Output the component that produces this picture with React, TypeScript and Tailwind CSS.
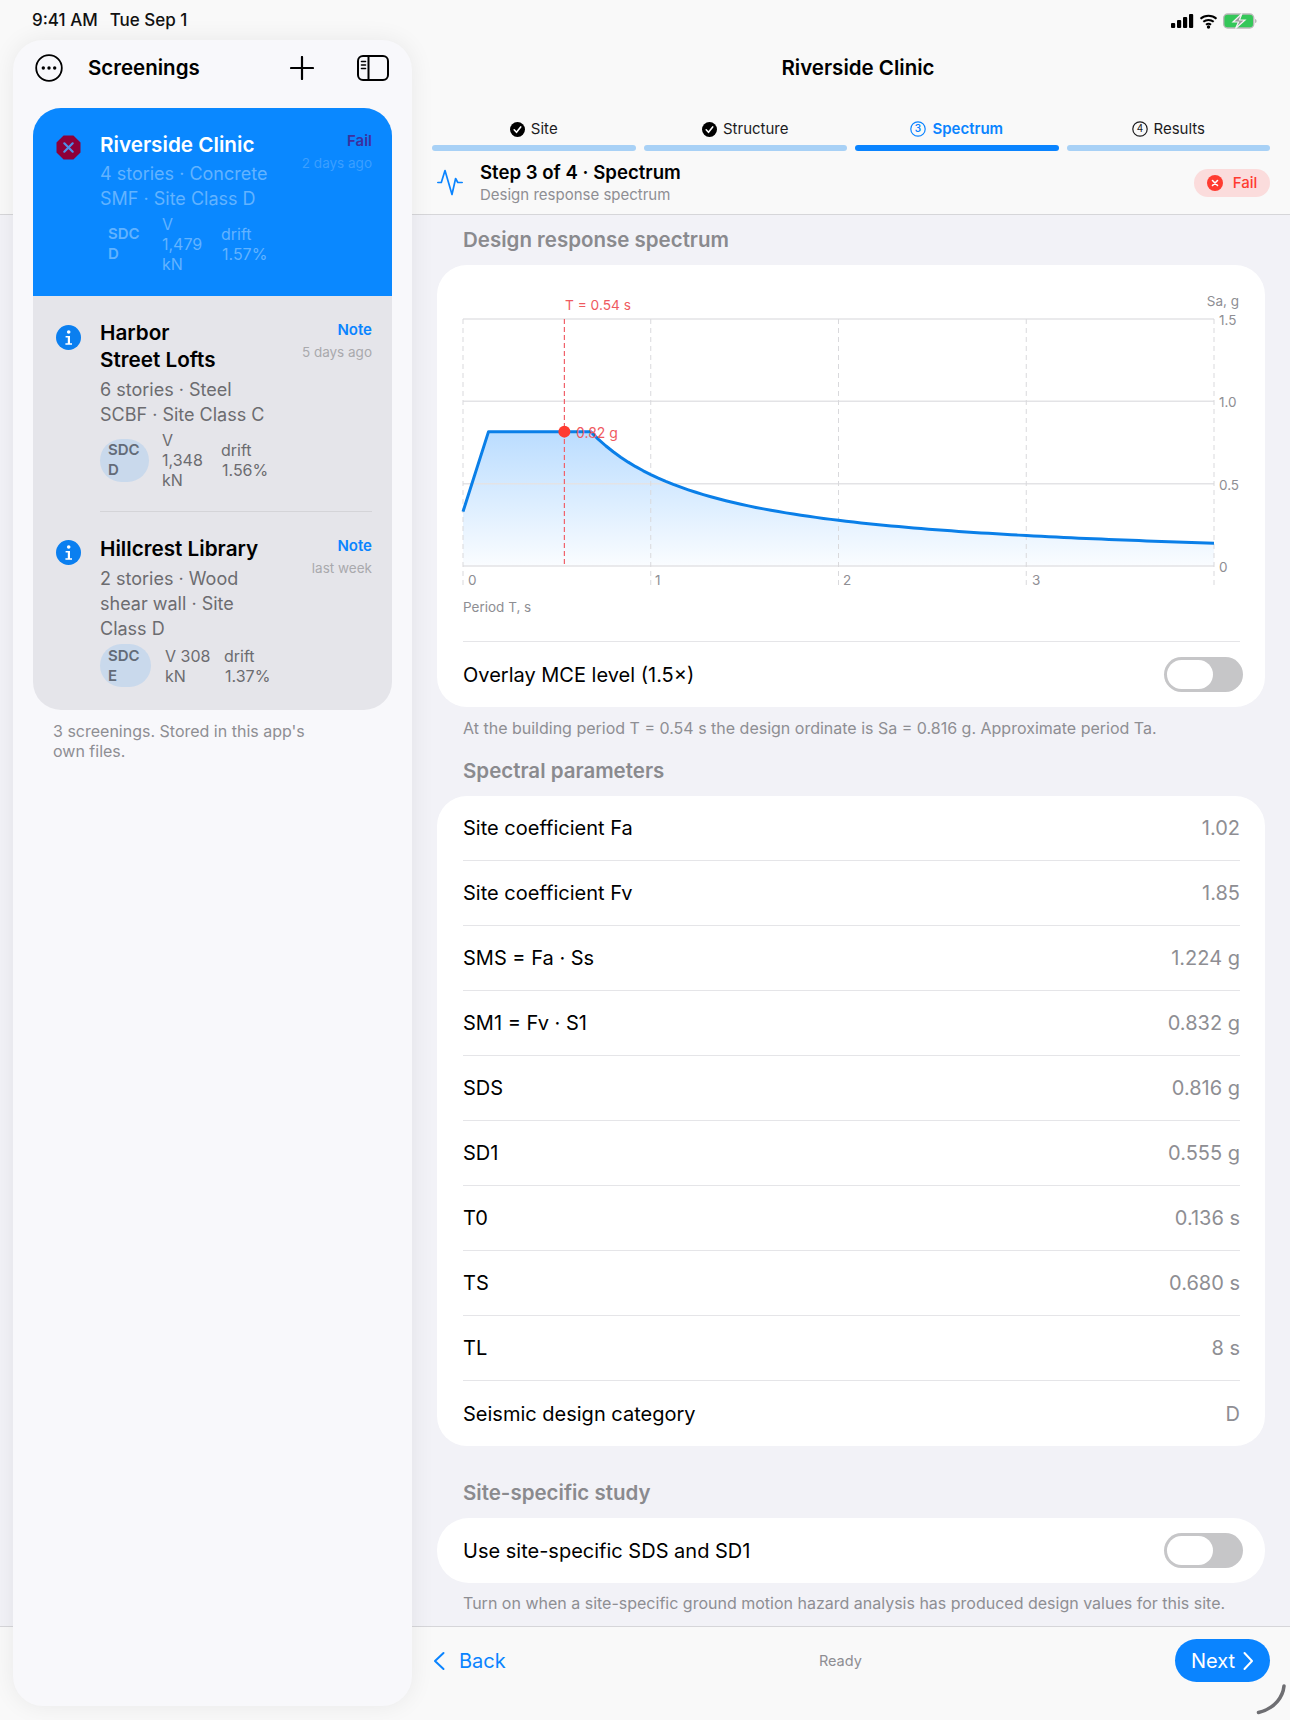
import type { ReactNode } from "react";

const font = { fontFamily: "Inter, 'Noto Sans', sans-serif" };

const PARAMS = [
  ["Site coefficient Fa", "1.02"],
  ["Site coefficient Fv", "1.85"],
  ["SMS = Fa · Ss", "1.224 g"],
  ["SM1 = Fv · S1", "0.832 g"],
  ["SDS", "0.816 g"],
  ["SD1", "0.555 g"],
  ["T0", "0.136 s"],
  ["TS", "0.680 s"],
  ["TL", "8 s"],
  ["Seismic design category", "D"],
];

// chart geometry, origin is the card's top left corner
const X0 = 26;
const PX_PER_S = 187.75;
const Y0 = 301;
const PX_PER_G = 164.67;
const px = (t: number) => X0 + t * PX_PER_S;
const py = (g: number) => Y0 - g * PX_PER_G;

function spectrumPath() {
  const pts: string[] = [`${px(0)},${py(0.33)}`, `${px(0.136)},${py(0.816)}`, `${px(0.68)},${py(0.816)}`];
  for (let t = 0.72; t <= 4; t += 0.04) pts.push(`${px(t)},${py(0.555 / t)}`);
  pts.push(`${px(4)},${py(0.555 / 4)}`);
  return pts;
}

function SpectrumChart() {
  const pts = spectrumPath();
  const line = "M" + pts.join(" L");
  const area = `${line} L${px(4)},${py(0)} L${px(0)},${py(0)} Z`;
  return (
    <svg width="828" height="376" viewBox="0 0 828 376" className="block" style={font}>
      <defs>
        <linearGradient id="fill" x1="0" y1="0" x2="0" y2="1">
          <stop offset="0" stopColor="#0a84ff" stopOpacity="0.28" />
          <stop offset="1" stopColor="#0a84ff" stopOpacity="0.02" />
        </linearGradient>
      </defs>
      <path d={area} fill="url(#fill)" />
      {[1.5, 1, 0.5, 0].map((g) => (
        <line key={g} x1={X0} x2={px(4)} y1={py(g)} y2={py(g)} stroke="#e3e3e6" strokeWidth="1.5" />
      ))}
      {[0, 1, 2, 3, 4].map((t) => (
        <line key={t} x1={px(t)} x2={px(t)} y1={py(1.5)} y2={320} stroke="#d9d9dc" strokeWidth="1" strokeDasharray="5 4" />
      ))}
      <line x1={px(0.54)} x2={px(0.54)} y1={py(1.5)} y2={py(0)} stroke="#f0626a" strokeWidth="1.2" strokeDasharray="5 3" />
      <path d={line} fill="none" stroke="#0a7fe8" strokeWidth="3" strokeLinejoin="round" />
      <circle cx={px(0.54)} cy={py(0.816)} r="6" fill="#ff3b30" />
      <text x="128" y="45" fontSize="13.7" fill="#ef5a5f">T = 0.54 s</text>
      <text x="139" y="172.5" fontSize="14" fill="#ef5a5f">0.82 g</text>
      <text x="802" y="41" fontSize="13.5" fill="#8e8e93" textAnchor="end">Sa, g</text>
      {[["1.5", 59.5], ["1.0", 141.5], ["0.5", 224.5], ["0", 306.5]].map(([t, y]) => (
        <text key={t} x="782" y={y} fontSize="13.5" fill="#8e8e93">{t}</text>
      ))}
      {[["0", 31], ["1", 218], ["2", 406], ["3", 595]].map(([t, x]) => (
        <text key={t} x={x} y="320" fontSize="13.5" fill="#8e8e93">{t}</text>
      ))}
      <text x="26" y="347" fontSize="13.5" fill="#8e8e93">Period T, s</text>
    </svg>
  );
}

function Toggle() {
  return (
    <div className="w-[79px] h-[35px] rounded-full bg-[#c6c6c8] p-[3px] shrink-0">
      <div className="w-[46px] h-[29px] rounded-full bg-white" />
    </div>
  );
}

function InfoIcon() {
  return (
    <svg width="25" height="25" viewBox="0 0 25 25" className="shrink-0">
      <circle cx="12.5" cy="12.5" r="12.5" fill="#0a7ff0" />
      <circle cx="12.7" cy="7" r="1.8" fill="#fff" />
      <path d="M9.6 11h4.4v7.2h2v1.6H9.4v-1.6h2.4v-5.6H9.6z" fill="#fff" />
    </svg>
  );
}

function FailOctagon() {
  return (
    <svg width="25" height="25" viewBox="0 0 25 25" className="shrink-0">
      <path d="M7.6 0.5h9.8l7.1 7v10l-7.1 7H7.6l-7.1-7v-10z" fill="#8e0038" />
      <path d="M8.3 8.3l8.4 8.4M16.7 8.3l-8.4 8.4" stroke="#4f8fe8" strokeWidth="2.2" strokeLinecap="round" />
    </svg>
  );
}

function DoneIcon() {
  return (
    <svg width="15" height="15" viewBox="0 0 15 15" className="shrink-0">
      <circle cx="7.5" cy="7.5" r="7.5" fill="#000" />
      <path d="M4.2 7.8l2.3 2.5 4.2-5.4" fill="none" stroke="#fff" strokeWidth="1.6" strokeLinecap="round" strokeLinejoin="round" />
    </svg>
  );
}

function StepNumber({ n, color }: { n: number; color: string }) {
  return (
    <svg width="16" height="16" viewBox="0 0 16 16" className="shrink-0" style={font}>
      <circle cx="8" cy="8" r="7.2" fill="none" stroke={color} strokeWidth="1.2" />
      <text x="8" y="11.4" fontSize="10" fill={color} textAnchor="middle">{n}</text>
    </svg>
  );
}

function StepTab({ icon, label, active }: { icon: ReactNode; label: string; active?: boolean }) {
  return (
    <div className="flex-1 flex flex-col items-center gap-[6px]">
      <div className={`h-[20px] flex items-center gap-[6px] text-[15px] leading-[20px] ${active ? "text-[#0a84ff] font-semibold" : "text-[#1c1c1e]"}`}>
        {icon}
        <span>{label}</span>
      </div>
      <div className={`w-full h-[6px] rounded-full ${active ? "bg-[#0a84ff]" : "bg-[#a8d1f6]"}`} />
    </div>
  );
}

function Metrics({ sdc, v, drift, wide, tint }: { sdc: string[]; v: string[]; drift: string[]; wide?: boolean; tint?: boolean }) {
  return (
    <div className="flex items-center text-[16px] leading-[20px]">
      <div className={`${wide ? "w-[51px] mr-[14px]" : "w-[49px] mr-[13px]"} h-[43px] pl-[8px] py-[1.5px] rounded-full font-semibold text-[15px] ${tint ? "" : "bg-[#c9d9ec] text-[#636b78]"}`}>
        {sdc.map((t) => <div key={t}>{t}</div>)}
      </div>
      <div className="w-[59px]">
        {v.map((t) => <div key={t}>{t}</div>)}
      </div>
      <div>
        <div>{drift[0]}</div>
        <div className="pl-px">{drift[1]}</div>
      </div>
    </div>
  );
}

function Row({ label, value, last }: { label: string; value: string; last?: boolean }) {
  return (
    <div className={`h-[65px] ml-[26px] mr-[25px] flex items-center justify-between text-[20px] ${last ? "" : "border-b border-[#e5e5e8]"}`}>
      <span className="text-black">{label}</span>
      <span className="text-[#8e8e93]">{value}</span>
    </div>
  );
}

function Sidebar() {
  return (
    <aside className="absolute left-[13px] top-[40px] w-[399px] h-[1666px] rounded-[30px] bg-[#f8f8fb] shadow-[0_0_24px_rgba(0,0,0,0.07)] px-[20px]">
      <div className="h-[56px] flex items-center pl-[2px] pr-[3px]">
        <svg width="28" height="28" viewBox="0 0 28 28">
          <circle cx="14" cy="14" r="12.8" fill="none" stroke="#000" strokeWidth="1.8" />
          <circle cx="8.3" cy="14" r="1.7" />
          <circle cx="14" cy="14" r="1.7" />
          <circle cx="19.7" cy="14" r="1.7" />
        </svg>
        <span className="ml-[25px] text-[20.5px] font-semibold text-black flex-1">Screenings</span>
        <svg width="24" height="24" viewBox="0 0 24 24" className="mr-[43px]">
          <path d="M12 1v22M1 12h22" stroke="#000" strokeWidth="2.2" strokeLinecap="round" />
        </svg>
        <svg width="32" height="26" viewBox="0 0 32 26">
          <rect x="1" y="1" width="30" height="24" rx="5" fill="none" stroke="#000" strokeWidth="2" />
          <path d="M11.5 1v24" stroke="#000" strokeWidth="2" />
          <path d="M4.5 6.5h4M4.5 10h4M4.5 13.5h4" stroke="#000" strokeWidth="1.6" strokeLinecap="round" />
        </svg>
      </div>

      <div className="mt-[12px] rounded-[28px] overflow-hidden bg-[#e5e5ea]">
        {/* selected row */}
        <div className="h-[188px] bg-[#0a88ff] pt-[23px] pl-[23px] pr-[20px] flex">
          <div className="w-[44px] shrink-0 pt-[4px]"><FailOctagon /></div>
          <div className="flex-1">
            <div className="text-[20.7px] leading-[27px] font-semibold text-white">Riverside Clinic</div>
            <div className="mt-[3px] mb-[3px] text-[18px] leading-[25px] text-[#62b3ff]">
              <div>4 stories · Concrete</div>
              <div>SMF · Site Class D</div>
            </div>
            <div className="text-[#62b3ff]">
              <Metrics tint sdc={["SDC", "D"]} v={["V", "1,479", "kN"]} drift={["drift", "1.57%"]} />
            </div>
          </div>
          <div className="text-right">
            <div className="text-[15px] leading-[20px] font-semibold text-[#3d2f9e]">Fail</div>
            <div className="mt-[2px] text-[13.5px] leading-[20px] text-[#3b9fff]">2 days ago</div>
          </div>
        </div>

        {/* Harbor */}
        <div className="pl-[23px] pr-[20px] pt-[23px] flex">
          <div className="w-[44px] shrink-0 pt-[6px]"><InfoIcon /></div>
          <div className="flex-1 pb-[21px] text-[#6c6c70]">
            <div className="text-[20.7px] leading-[27px] font-semibold text-black">
              <div>Harbor</div>
              <div>Street Lofts</div>
            </div>
            <div className="mt-[4px] mb-[3px] text-[18px] leading-[25px]">
              <div>6 stories · Steel</div>
              <div>SCBF · Site Class C</div>
            </div>
            <Metrics sdc={["SDC", "D"]} v={["V", "1,348", "kN"]} drift={["drift", "1.56%"]} />
          </div>
          <div className="text-right w-0 pt-[1px] flex flex-col items-end">
            <div className="text-[15px] leading-[20px] font-semibold text-[#0a84ff]">Note</div>
            <div className="mt-[2px] text-[13.5px] leading-[20px] whitespace-nowrap text-[#a9a9ad]">5 days ago</div>
          </div>
        </div>
        <div className="ml-[67px] mr-[20px] h-px bg-[#d4d4d8]" />

        {/* Hillcrest */}
        <div className="pl-[23px] pr-[20px] pt-[23px] pb-[23px] flex">
          <div className="w-[44px] shrink-0 pt-[5px]"><InfoIcon /></div>
          <div className="flex-1 text-[#6c6c70]">
            <div className="text-[20.7px] leading-[27px] font-semibold text-black">Hillcrest Library</div>
            <div className="mt-[4px] mb-[3px] text-[18px] leading-[25px]">
              <div>2 stories · Wood</div>
              <div>shear wall · Site</div>
              <div>Class D</div>
            </div>
            <Metrics wide sdc={["SDC", "E"]} v={["V 308", "kN"]} drift={["drift", "1.37%"]} />
          </div>
          <div className="text-right w-0 pt-[1px] flex flex-col items-end">
            <div className="text-[15px] leading-[20px] font-semibold text-[#0a84ff]">Note</div>
            <div className="mt-[2px] text-[13.5px] leading-[20px] whitespace-nowrap text-[#a9a9ad]">last week</div>
          </div>
        </div>
      </div>

      <div className="mt-[11px] pl-[20px] text-[16px] leading-[20px] text-[#8e8e93]">
        <div>3 screenings. Stored in this app's</div>
        <div>own files.</div>
      </div>
    </aside>
  );
}

export default function App() {
  return (
    <div className="relative w-[1290px] h-[1720px] overflow-hidden bg-[#f2f2f7] flex flex-col" style={font}>
      <header className="h-[215px] shrink-0 bg-[#f9f9f9] border-b border-[#d6d6d9] flex flex-col">
        <div className="h-[40px] shrink-0 pt-[1px] pl-[32px] pr-[33px] flex items-center justify-between">
          <div className="text-[17px] font-medium text-[#111] flex gap-[12px]">
            <span>9:41 AM</span>
            <span>Tue Sep 1</span>
          </div>
          <svg width="86" height="16" viewBox="0 0 86 16">
            <rect x="0" y="10" width="4.2" height="5" rx="1" />
            <rect x="6" y="7" width="4.2" height="8" rx="1" />
            <rect x="12" y="4" width="4.2" height="11" rx="1" />
            <rect x="18" y="1" width="4.2" height="14" rx="1" />
            <path d="M29.5 5.7a12 12 0 0 1 16 0M32.3 8.8a8 8 0 0 1 10.4 0M35 11.7a4 4 0 0 1 5 0" fill="none" stroke="#000" strokeWidth="2" />
            <circle cx="37.5" cy="14" r="1.7" />
            <rect x="52.7" y="1" width="30" height="14" rx="4" fill="#34c759" stroke="#b9b9b9" strokeWidth="1.4" />
            <path d="M84 6v4c1 0 1.6-1 1.6-2s-.6-2-1.6-2z" fill="#b9b9b9" />
            <path d="M71 0.5l-9 8.5h5.5l-3 6.5 9.5-8.5h-5.5z" fill="#9a9a9a" stroke="#f4f4f4" strokeWidth="1.2" />
          </svg>
        </div>
        <div className="h-[56px] shrink-0 pl-[426px] flex items-center justify-center text-[20.5px] font-semibold text-black">
          Riverside Clinic
        </div>
        <div className="pl-[432px] pr-[20px] mt-[23px] flex gap-[8px]">
          <StepTab icon={<DoneIcon />} label="Site" />
          <StepTab icon={<DoneIcon />} label="Structure" />
          <StepTab icon={<StepNumber n={3} color="#0a84ff" />} label="Spectrum" active />
          <StepTab icon={<StepNumber n={4} color="#1c1c1e" />} label="Results" />
        </div>
        <div className="flex-1 pl-[437px] pr-[20px] flex items-center">
          <svg width="26" height="28" viewBox="0 0 26 28" className="mr-[17px] mt-[-2px]">
            <path d="M0.8 14.5h3.5L8 2.5l7 24 3.6-16 2.2 4h4.4" fill="none" stroke="#0a84ff" strokeWidth="1.7" strokeLinejoin="round" strokeLinecap="round" />
          </svg>
          <div className="flex-1">
            <div className="text-[18.6px] leading-[24px] font-semibold text-black">Step 3 of 4 · Spectrum</div>
            <div className="mt-[1px] text-[15px] leading-[20px] text-[#8e8e93]">Design response spectrum</div>
          </div>
          <div className="w-[76px] h-[28px] rounded-full bg-[#fbdcdc] flex items-center justify-center gap-[10px]">
            <svg width="16" height="16" viewBox="0 0 16 16">
              <circle cx="8" cy="8" r="8" fill="#ff3b30" />
              <path d="M5.5 5.5l5 5M10.5 5.5l-5 5" stroke="#fff" strokeWidth="1.6" strokeLinecap="round" />
            </svg>
            <span className="pt-[1px] text-[15px] font-medium text-[#ff3b30]">Fail</span>
          </div>
        </div>
      </header>

      <main className="flex-1 pl-[437px] pr-[25px] overflow-hidden">
        <h2 className="mt-[11px] pl-[26px] text-[20.5px] leading-[28px] font-semibold text-[#8a8a8e]">Design response spectrum</h2>
        <section className="mt-[11px] h-[442px] rounded-[30px] bg-white overflow-hidden">
          <SpectrumChart />
          <div className="h-[66px] ml-[26px] mr-[25px] border-t border-[#e5e5e8] flex items-center justify-between text-[20px] text-black">
            <span>Overlay MCE level (1.5×)</span>
            <div className="mr-[-3px]"><Toggle /></div>
          </div>
        </section>
        <p className="mt-[10px] pl-[26px] text-[16px] leading-[22px] text-[#8e8e93]">
          At the building period T = 0.54 s the design ordinate is Sa = 0.816 g. Approximate period Ta.
        </p>

        <h2 className="mt-[18px] pl-[26px] text-[20.5px] leading-[28px] font-semibold text-[#8a8a8e]">Spectral parameters</h2>
        <section className="mt-[11px] rounded-[30px] bg-white overflow-hidden">
          {PARAMS.map(([label, value], i) => (
            <Row key={label} label={label} value={value} last={i === PARAMS.length - 1} />
          ))}
        </section>

        <h2 className="mt-[33px] pl-[26px] text-[20.5px] leading-[28px] font-semibold text-[#8a8a8e]">Site-specific study</h2>
        <section className="mt-[11px] h-[65px] rounded-[32px] bg-white pl-[26px] pr-[25px] flex items-center justify-between text-[20px] text-black">
          <span>Use site-specific SDS and SD1</span>
          <div className="mr-[-3px]"><Toggle /></div>
        </section>
        <p className="mt-[9px] pl-[26px] text-[16px] leading-[22px] text-[#8e8e93]">
          Turn on when a site-specific ground motion hazard analysis has produced design values for this site.
        </p>
      </main>

      <footer className="h-[94px] shrink-0 bg-[#f9f9f9] border-t border-[#d6d6d9] pl-[432px] pr-[20px] pt-[12px] flex items-start justify-between">
        <div className="h-[43px] flex items-center text-[20px] text-[#0a84ff]">
          <svg width="14" height="20" viewBox="0 0 14 20" className="mr-[13px]">
            <path d="M11.5 2L3 10l8.5 8" fill="none" stroke="#0a84ff" strokeWidth="2" strokeLinecap="round" strokeLinejoin="round" />
          </svg>
          Back
        </div>
        <div className="h-[43px] flex items-center text-[14.5px] text-[#8e8e93]">Ready</div>
        <div className="w-[95px] h-[43px] rounded-full bg-[#0a84ff] flex items-center justify-center gap-[7px] text-[20px] text-white">
          Next
          <svg width="12" height="20" viewBox="0 0 12 20">
            <path d="M2.5 2L10 10l-7.5 8" fill="none" stroke="#fff" strokeWidth="2" strokeLinecap="round" strokeLinejoin="round" />
          </svg>
        </div>
      </footer>

      <Sidebar />

      {/* stray pencil hover mark in the corner of the capture */}
      <svg width="32" height="32" viewBox="0 0 32 32" className="absolute left-[1256px] top-[1684px]">
        <path d="M28 2C27 12 20 24 2.5 28.5" fill="none" stroke="#6e6e72" strokeWidth="3.5" strokeLinecap="round" />
      </svg>
    </div>
  );
}
